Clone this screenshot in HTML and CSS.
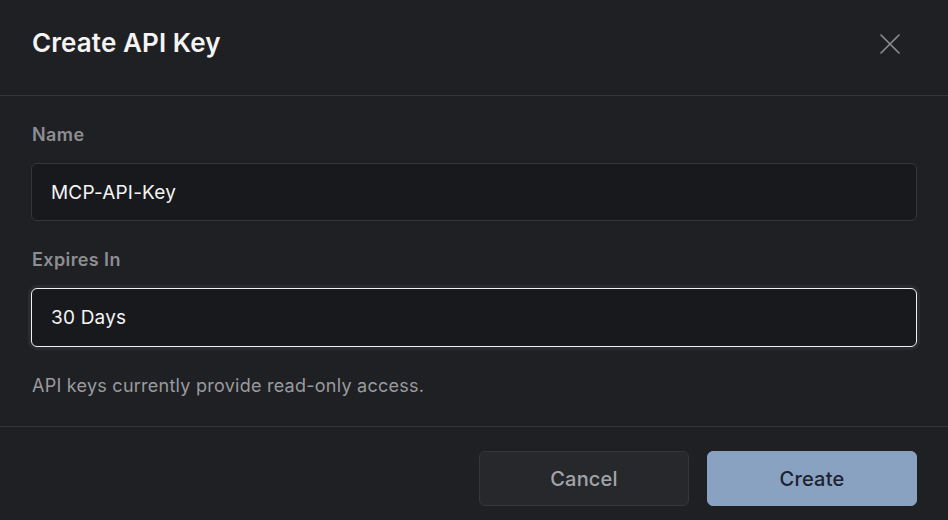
FILE: index.html
```html
<!DOCTYPE html>
<html>
<head>
<meta charset="utf-8">
<link rel="stylesheet" href="styles.css">
</head>
<body>
<div class="dialog">
  <div class="header">
    <h1 class="title">Create API Key</h1>
    <button class="close" aria-label="Close">
      <svg width="20" height="20" viewBox="0 0 20 20"><path d="M1 1L19 19M19 1L1 19" stroke="#8e8f93" stroke-width="1.6" stroke-linecap="round"/></svg>
    </button>
  </div>
  <div class="body">
    <label class="label">Name</label>
    <div class="field">MCP-API-Key</div>
    <label class="label label-2">Expires In</label>
    <div class="field focused">30 Days</div>
    <p class="help">API keys currently provide read-only access.</p>
  </div>
  <div class="footer">
    <button class="btn cancel">Cancel</button>
    <button class="btn create">Create</button>
  </div>
</div>
</body>
</html>
```
FILE: styles.css
```css
html, body {
  margin: 0;
  padding: 0;
  background: #1f2024;
}
body {
  font-family: Inter, "Noto Sans", sans-serif;
  width: 948px;
  height: 520px;
  overflow: hidden;
}
.dialog {
  display: flex;
  flex-direction: column;
}
.header {
  height: 96px;
  box-sizing: border-box;
  border-bottom: 1px solid #34353a;
  display: flex;
  align-items: center;
  justify-content: space-between;
  padding: 0 48px 0 32px;
}
.title {
  margin: 0;
  font-size: 26px;
  font-weight: 600;
  color: #f4f4f5;
  letter-spacing: 0.1px;
  padding-bottom: 10px;
}
.close {
  background: none;
  border: 0;
  padding: 0;
  width: 20px;
  height: 20px;
  margin-bottom: 8px;
  display: flex;
}
.body {
  padding: 24px 31px 28px 31px;
  display: flex;
  flex-direction: column;
  border-bottom: 1px solid #34353a;
}
.label {
  font-size: 18px;
  font-weight: 600;
  color: #8d8e92;
  margin-left: 1px;
  line-height: 30px;
  letter-spacing: 0.4px;
}
.label-2 {
  margin-top: 24px;
}
.field {
  margin-top: 13px;
  height: 58px;
  box-sizing: border-box;
  border: 1px solid #35363b;
  border-radius: 6px;
  background: #18191c;
  color: #f4f4f5;
  font-size: 19px;
  letter-spacing: 0.2px;
  display: flex;
  align-items: center;
  padding: 0 19px;
}
.field.focused {
  border-color: #f0f0f2;
  box-shadow: 0 0 0 3px #2a2b30;
  height: 59px;
}
.help {
  margin: 27px 0 0 1px;
  font-size: 18px;
  color: #9a9b9f;
  line-height: 24px;
  letter-spacing: 0.25px;
}
.footer {
  display: flex;
  justify-content: flex-end;
  gap: 18px;
  padding: 24px 31px 0 0;
}
.btn {
  width: 210px;
  height: 55px;
  border-radius: 6px;
  font-family: Inter, "Noto Sans", sans-serif;
  font-size: 20px;
  font-weight: 500;
  letter-spacing: 0.2px;
  cursor: pointer;
}
.cancel {
  background: #27282c;
  border: 1px solid #36373c;
  color: #a3a4a8;
}
.create {
  background: #8aa2c1;
  border: 1px solid #8aa2c1;
  color: #1c2230;
}
```
